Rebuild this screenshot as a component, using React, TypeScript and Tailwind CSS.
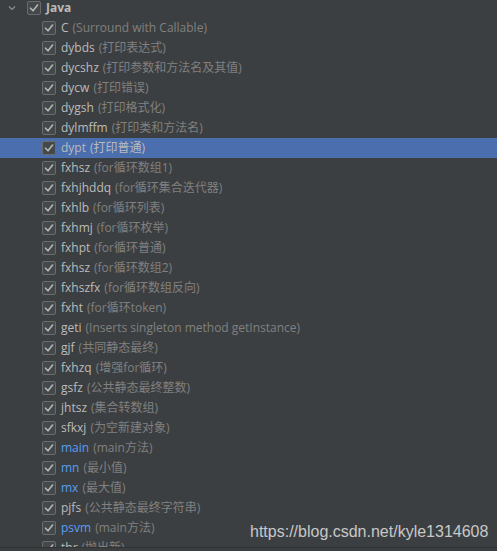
import React from 'react';

type Item = { name: string; desc: string; blue?: boolean; selected?: boolean };

const items: Item[] = [
  { name: 'C', desc: '(Surround with Callable)' },
  { name: 'dybds', desc: '(打印表达式)' },
  { name: 'dycshz', desc: '(打印参数和方法名及其值)' },
  { name: 'dycw', desc: '(打印错误)' },
  { name: 'dygsh', desc: '(打印格式化)' },
  { name: 'dylmffm', desc: '(打印类和方法名)' },
  { name: 'dypt', desc: '(打印普通)', selected: true },
  { name: 'fxhsz', desc: '(for循环数组1)' },
  { name: 'fxhjhddq', desc: '(for循环集合迭代器)' },
  { name: 'fxhlb', desc: '(for循环列表)' },
  { name: 'fxhmj', desc: '(for循环枚举)' },
  { name: 'fxhpt', desc: '(for循环普通)' },
  { name: 'fxhsz', desc: '(for循环数组2)' },
  { name: 'fxhszfx', desc: '(for循环数组反向)' },
  { name: 'fxht', desc: '(for循环token)' },
  { name: 'geti', desc: '(Inserts singleton method getInstance)' },
  { name: 'gjf', desc: '(共同静态最终)' },
  { name: 'fxhzq', desc: '(增强for循环)' },
  { name: 'gsfz', desc: '(公共静态最终整数)' },
  { name: 'jhtsz', desc: '(集合转数组)' },
  { name: 'sfkxj', desc: '(为空新建对象)' },
  { name: 'main', desc: '(main方法)', blue: true },
  { name: 'mn', desc: '(最小值)', blue: true },
  { name: 'mx', desc: '(最大值)', blue: true },
  { name: 'pjfs', desc: '(公共静态最终字符串)' },
  { name: 'psvm', desc: '(main方法)', blue: true },
  { name: 'thr', desc: '(抛出新)' },
];

const Check = () => (
  <span className="w-[14px] h-[14px] shrink-0 rounded-[2px] border border-[#6b6b6b] bg-[#43494a] flex items-center justify-center">
    <svg width="10" height="10" viewBox="0 0 10 10" fill="none">
      <path d="M1.5 5.2 L4 7.8 L8.6 2" stroke="#b4b4b4" strokeWidth="1.6" strokeLinecap="round" strokeLinejoin="round" />
    </svg>
  </span>
);

const App: React.FC = () => {
  return (
    <div
      className="relative w-full h-[551px] bg-[#3c3f41] overflow-hidden text-[12px]"
      style={{ fontFamily: '"Open Sans", "Noto Sans CJK SC", sans-serif' }}
    >
      <div className="h-[548px] overflow-hidden border-b border-[#323232]">
        <div className="-mt-[2px]">
          {/* group header */}
          <div className="h-[20px] flex items-center">
            <svg className="ml-[8px] mr-[11px]" width="8" height="8" viewBox="0 0 8 8" fill="none">
              <path d="M1 2.5 L4 5.5 L7 2.5" stroke="#8c8c8c" strokeWidth="1.2" />
            </svg>
            <Check />
            <span className="ml-[5px] font-bold text-[#bbbbbb]">Java</span>
          </div>

          {items.map((it, i) => (
            <div
              key={i}
              className={`h-[20px] flex items-center pl-[42px] whitespace-nowrap ${it.selected ? 'bg-[#4b6eaf]' : ''}`}
            >
              <Check />
              <span className={`ml-[5px] ${it.blue ? 'text-[#589df6]' : 'text-[#bbbbbb]'}`}>{it.name}</span>
              <span className={`ml-[4px] ${it.selected ? 'text-[#bbbbbb]' : 'text-[#808080]'}`}>{it.desc}</span>
            </div>
          ))}
        </div>
      </div>

      {/* watermark */}
      <div
        className="absolute left-[250px] top-[520px] text-[16px] text-[#c8c8c8] whitespace-nowrap"
        style={{ fontFamily: '"Liberation Sans", Arial, sans-serif' }}
      >
        https://blog.csdn.net/kyle1314608
      </div>
    </div>
  );
};

export default App;
